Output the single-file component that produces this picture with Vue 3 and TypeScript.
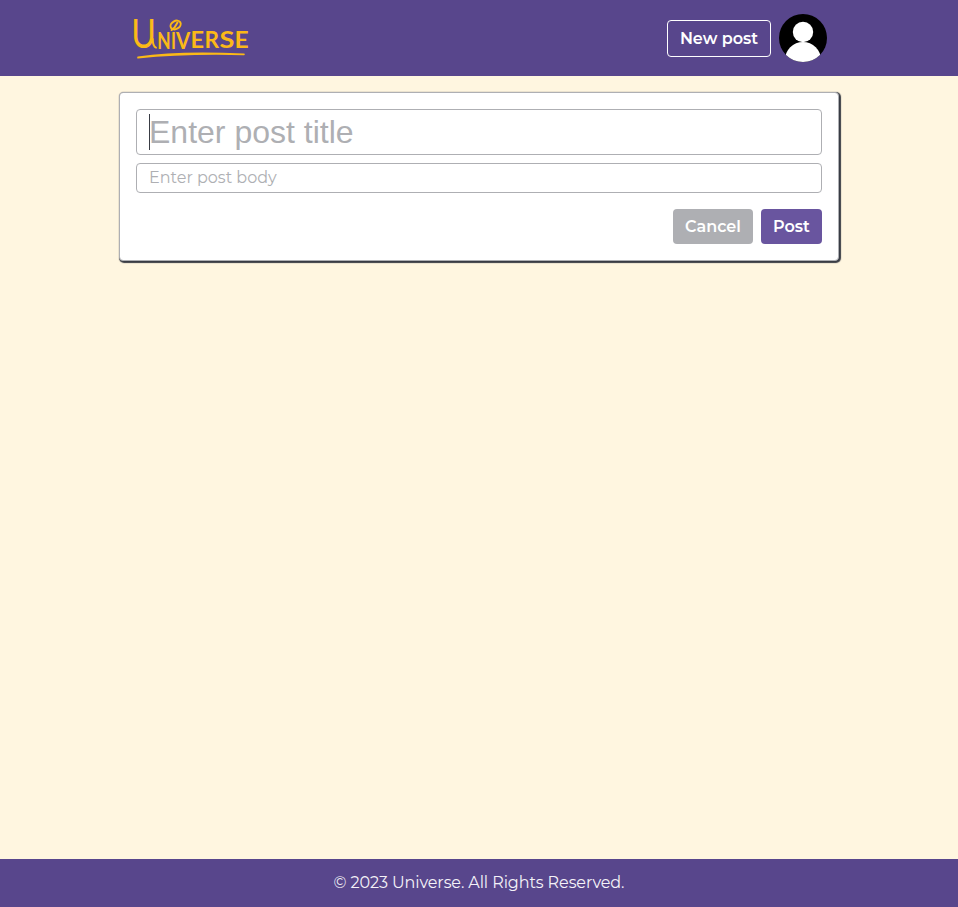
<script setup lang="ts">
import { ref } from 'vue'

interface Glyph {
  char: string
  x: number
  y: number
  stretch: number
}

const title = ref<string>('')
const body = ref<string>('')

const glyphs: Glyph[] = [
  { char: 'N', x: 26.2, y: 35, stretch: 0.79 },
  { char: 'I', x: 40, y: 34.8, stretch: 0.76 },
  { char: 'V', x: 45.1, y: 35, stretch: 0.93 },
  { char: 'E', x: 59.6, y: 34.4, stretch: 1.07 },
  { char: 'R', x: 73.6, y: 34.4, stretch: 1.03 },
  { char: 'S', x: 88.4, y: 34, stretch: 1.24 },
  { char: 'E', x: 103.6, y: 33.6, stretch: 1.12 },
]

function placement(g: Glyph): string {
  return `translate(${g.x} ${g.y}) scale(${g.stretch} 1)`
}

function reset(): void {
  title.value = ''
  body.value = ''
}
</script>

<template>
  <div class="page">
    <header class="header">
      <div class="bar">
        <svg class="logo" width="122" height="48" viewBox="0 0 122 48" role="img" aria-label="Universe">
          <text class="initial" transform="translate(0.2 34.4) scale(0.84 1)">U</text>
          <text v-for="(g, i) in glyphs" :key="i" class="wordmark" :transform="placement(g)">{{ g.char }}</text>
          <g class="strokes">
            <path d="M21.8 25Q21.8 32.5 25 33.6" />
            <ellipse cx="44.6" cy="11" rx="5.4" ry="4" transform="rotate(-30 44.6 11)" />
            <path d="M40.6 16 43.5 13.5 46.5 8.6" />
          </g>
          <path class="swash" d="M7 43.4C40 38.4 78 38.6 113 40.4C79 39.6 40 40.2 7 43.8Z" />
        </svg>
        <div class="actions">
          <button class="btn outline" type="button">New post</button>
          <svg class="avatar" width="48" height="48" viewBox="0 0 48 48">
            <clipPath id="avatar-clip"><circle cx="24" cy="24" r="24" /></clipPath>
            <g clip-path="url(#avatar-clip)">
              <rect width="48" height="48" fill="#000" />
              <circle cx="24" cy="18" r="10.2" fill="#fff" />
              <circle cx="24" cy="46" r="18" fill="#fff" />
            </g>
          </svg>
        </div>
      </div>
    </header>

    <main class="main">
      <form class="card" @submit.prevent>
        <div class="title-field">
          <input v-model="title" class="field title" placeholder="Enter post title" />
          <span v-if="!title" class="caret"></span>
        </div>
        <input v-model="body" class="field body" placeholder="Enter post body" />
        <div class="buttons">
          <button class="btn cancel" type="button" @click="reset">Cancel</button>
          <button class="btn post" type="submit">Post</button>
        </div>
      </form>
    </main>

    <footer class="footer"><span>© 2023 Universe. All Rights Reserved.</span></footer>
  </div>
</template>

<style>
body {
  margin: 0;
}
</style>

<style scoped>
.page {
  display: flex;
  flex-direction: column;
  min-height: 100vh;
  background: #fff6e0;
  font-family: Montserrat, Inter, sans-serif;
  font-size: 16px;
}
.header {
  height: 76px;
  background: #58468c;
}
.bar {
  box-sizing: border-box;
  width: 704px;
  height: 76px;
  margin: 0 auto;
  padding-right: 4px;
  display: flex;
  align-items: center;
  justify-content: space-between;
}
.logo {
  margin-left: 4px;
  overflow: visible;
}
.wordmark,
.initial {
  fill: #fbb917;
  font-family: Lato, sans-serif;
  font-size: 22px;
  font-weight: 700;
}
.initial {
  font-size: 40px;
  font-weight: 400;
}
.strokes {
  fill: none;
  stroke: #fbb917;
  stroke-width: 2;
  stroke-linecap: round;
}
.swash {
  fill: #fbb917;
  stroke: #fbb917;
  stroke-width: 1.6;
  stroke-linejoin: round;
}
.actions {
  display: flex;
  align-items: center;
  gap: 8px;
}
.avatar {
  display: block;
}
.btn {
  box-sizing: border-box;
  height: 35px;
  padding: 0;
  border: 0;
  border-radius: 4px;
  color: #fff;
  font: inherit;
  font-weight: 600;
  white-space: nowrap;
}
.outline {
  width: 104px;
  height: 37px;
  border: 1px solid #fff;
  background: transparent;
}
.main {
  flex: 1;
  padding: 16px 0;
}
.card {
  box-sizing: border-box;
  width: 720px;
  height: 169px;
  margin: 0 auto;
  padding: 16px;
  display: flex;
  flex-direction: column;
  border: 1px solid #aeafb3;
  border-radius: 4px;
  background: #fff;
  box-shadow: 1px 1px 1px 1px #393c44;
}
.title-field {
  position: relative;
  height: 46px;
  margin-bottom: 8px;
}
.field {
  box-sizing: border-box;
  display: block;
  width: 100%;
  padding: 0 12px;
  border: 1px solid #aeafb3;
  border-radius: 4px;
  background: #fff;
  outline: 0;
  color: #393c44;
}
.field::placeholder {
  color: #aeafb3;
  opacity: 1;
}
.title {
  height: 46px;
  font: 32px "Liberation Sans", Arial, sans-serif;
}
.body {
  height: 30px;
  padding-bottom: 2px;
  font: inherit;
}
.caret {
  position: absolute;
  left: 13px;
  top: 5px;
  width: 1px;
  height: 36px;
  background: #393c44;
}
.buttons {
  display: flex;
  justify-content: flex-end;
  gap: 8px;
  margin-top: 16px;
}
.cancel {
  width: 80px;
  background: #aeafb3;
}
.post {
  width: 61px;
  background: #69559f;
}
.footer {
  box-sizing: border-box;
  height: 48px;
  padding-bottom: 2px;
  display: flex;
  align-items: center;
  justify-content: center;
  background: #58468c;
  color: #f4f2f8;
  letter-spacing: -0.1px;
}
</style>
